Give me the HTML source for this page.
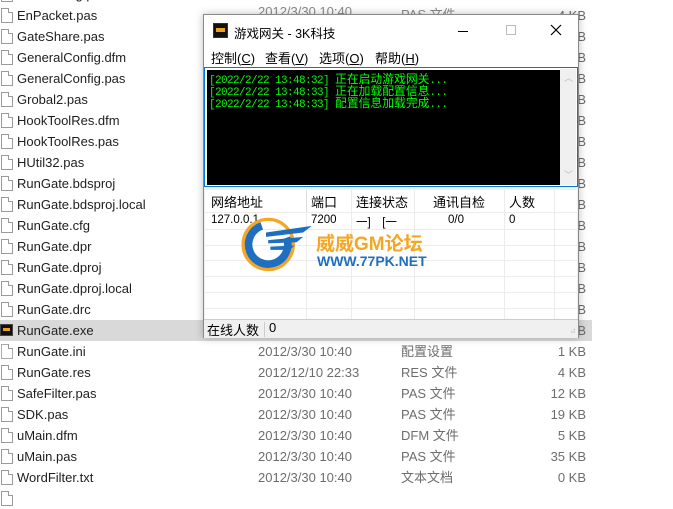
<!DOCTYPE html>
<html><head><meta charset="utf-8"><style>
*{margin:0;padding:0;box-sizing:border-box}
body{width:673px;height:493px;overflow:hidden;background:#fff;position:relative;font-family:"Liberation Sans","Noto Sans CJK SC",sans-serif;font-size:13px}
.row{position:absolute;left:0;width:592px;height:21px;line-height:21px;color:#1e1e1e}
.row.sel{background:#d9d9d9}
.ic{position:absolute;left:1px;top:3px;width:12px;height:15px;border:1px solid #9a9a9a;background:#fff}
.ic:after{content:"";position:absolute;right:-1px;top:-1px;width:4px;height:4px;background:#fff;border-left:1px solid #9a9a9a;border-bottom:1px solid #9a9a9a}
.n{position:absolute;left:17px}
.d{position:absolute;left:258px;color:#6d6d6d}
.t{position:absolute;left:401px;color:#6d6d6d}
.s{position:absolute;right:6px;color:#6d6d6d}
.win{position:absolute;left:203px;top:14px;width:376px;height:324px;background:#f0f0f0;border:1px solid #8a8a8a;box-shadow:0 0 8px rgba(0,0,0,.25)}
.title{position:absolute;left:0;top:0;width:374px;height:32px;background:#fff}
.menu{position:absolute;left:0;top:32px;width:374px;height:20px;background:#fff;font-size:13px}
.menu span{position:absolute;top:1px}
.con{position:absolute;left:0;top:52px;width:374px;height:120px;border:1px solid #0078d7;background:#fff;padding:1px}
.blk{position:absolute;left:2px;top:2px;width:354px;height:115px;background:#000}
.ln{position:absolute;left:2px;color:#00ff00;white-space:nowrap;height:12px;line-height:12px}
.ln b{font-weight:normal;font-family:"Liberation Mono",monospace;font-size:11px;letter-spacing:-0.6px}
.ln i{font-style:normal;font-family:"Noto Sans CJK SC",sans-serif;font-size:11.8px}
.sb{position:absolute;right:1px;top:1px;width:16px;height:116px;background:#f0f0f0}
.list{position:absolute;left:1px;top:175px;width:372px;height:129px;background:#fff;overflow:hidden}
.hl{position:absolute;left:0;width:372px;height:1px;background:#ececec}
.vl{position:absolute;top:0;width:1px;height:129px;background:#ececec}
.h{position:absolute;top:2px;font-size:13px;color:#000}
.c{position:absolute;top:24px;font-size:11.5px;color:#000}
.status{position:absolute;left:0;top:304px;width:374px;height:19px;border-top:1px solid #ccc;background:#f0f0f0;font-size:13px}
</style></head><body>
<div class="row" style="top:-16px"><div class="ic"></div><span class="n">GateConfig.pas</span></div>
<div class="row" style="top:5px"><div class="ic"></div><span class="n">EnPacket.pas</span><span class="s">4 KB</span></div>
<div class="row" style="top:26px"><div class="ic"></div><span class="n">GateShare.pas</span><span class="s">KB</span></div>
<div class="row" style="top:47px"><div class="ic"></div><span class="n">GeneralConfig.dfm</span><span class="s">KB</span></div>
<div class="row" style="top:68px"><div class="ic"></div><span class="n">GeneralConfig.pas</span><span class="s">KB</span></div>
<div class="row" style="top:89px"><div class="ic"></div><span class="n">Grobal2.pas</span><span class="s">KB</span></div>
<div class="row" style="top:110px"><div class="ic"></div><span class="n">HookToolRes.dfm</span><span class="s">KB</span></div>
<div class="row" style="top:131px"><div class="ic"></div><span class="n">HookToolRes.pas</span><span class="s">KB</span></div>
<div class="row" style="top:152px"><div class="ic"></div><span class="n">HUtil32.pas</span><span class="s">KB</span></div>
<div class="row" style="top:173px"><div class="ic"></div><span class="n">RunGate.bdsproj</span><span class="s">KB</span></div>
<div class="row" style="top:194px"><div class="ic"></div><span class="n">RunGate.bdsproj.local</span><span class="s">KB</span></div>
<div class="row" style="top:215px"><div class="ic"></div><span class="n">RunGate.cfg</span><span class="s">KB</span></div>
<div class="row" style="top:236px"><div class="ic"></div><span class="n">RunGate.dpr</span><span class="s">KB</span></div>
<div class="row" style="top:257px"><div class="ic"></div><span class="n">RunGate.dproj</span><span class="s">KB</span></div>
<div class="row" style="top:278px"><div class="ic"></div><span class="n">RunGate.dproj.local</span><span class="s">KB</span></div>
<div class="row" style="top:299px"><div class="ic"></div><span class="n">RunGate.drc</span><span class="s">KB</span></div>
<div class="row sel" style="top:320px"><div style="position:absolute;left:0;top:4px;width:13px;height:12px;background:#111;border:1px solid #444"><div style="margin:3px 2px;width:7px;height:3px;background:#f0a020"></div></div><span class="n">RunGate.exe</span><span class="s">KB</span></div>
<div class="row" style="top:341px"><div class="ic" style="border-color:#aaa"></div><span class="n">RunGate.ini</span><span class="d">2012/3/30 10:40</span><span class="t">配置设置</span><span class="s">1 KB</span></div>
<div class="row" style="top:362px"><div class="ic"></div><span class="n">RunGate.res</span><span class="d">2012/12/10 22:33</span><span class="t">RES 文件</span><span class="s">4 KB</span></div>
<div class="row" style="top:383px"><div class="ic"></div><span class="n">SafeFilter.pas</span><span class="d">2012/3/30 10:40</span><span class="t">PAS 文件</span><span class="s">12 KB</span></div>
<div class="row" style="top:404px"><div class="ic"></div><span class="n">SDK.pas</span><span class="d">2012/3/30 10:40</span><span class="t">PAS 文件</span><span class="s">19 KB</span></div>
<div class="row" style="top:425px"><div class="ic"></div><span class="n">uMain.dfm</span><span class="d">2012/3/30 10:40</span><span class="t">DFM 文件</span><span class="s">5 KB</span></div>
<div class="row" style="top:446px"><div class="ic"></div><span class="n">uMain.pas</span><span class="d">2012/3/30 10:40</span><span class="t">PAS 文件</span><span class="s">35 KB</span></div>
<div class="row" style="top:467px"><div class="ic"></div><span class="n">WordFilter.txt</span><span class="d">2012/3/30 10:40</span><span class="t">文本文档</span><span class="s">0 KB</span></div>
<div class="row" style="top:488px"><div class="ic"></div></div>
<div style="position:absolute;left:258px;top:4px;color:#8a8a8a;font-size:13px">2012/3/30 10:40</div>
<div style="position:absolute;left:401px;top:4px;color:#8a8a8a;font-size:13px">PAS 文件</div>

<div class="win">
 <div class="title">
  <div style="position:absolute;left:9px;top:8px;width:15px;height:15px;background:#111;border:1px solid #333"><div style="margin:4px 2px;width:9px;height:4px;background:#f0a020"></div></div>
  <span style="position:absolute;left:30px;top:8px;font-size:12.5px;color:#000">游戏网关 - 3K科技</span>
  <div style="position:absolute;left:254px;top:16px;width:10px;height:1px;background:#000"></div>
  <div style="position:absolute;left:302px;top:10px;width:10px;height:10px;border:1px solid #bbb"></div>
  <svg style="position:absolute;left:346px;top:9px" width="12" height="12"><path d="M1 1L11 11M11 1L1 11" stroke="#000" stroke-width="1.2"/></svg>
 </div>
 <div class="menu"><span style="left:7px">控制(<u>C</u>)</span><span style="left:61px">查看(<u>V</u>)</span><span style="left:115px">选项(<u>O</u>)</span><span style="left:171px">帮助(<u>H</u>)</span></div>
 <div class="con"><div class="blk">
  <div class="ln" style="top:3px"><b>[2022/2/22 13:48:32] </b><i>正在启动游戏网关</i><b>...</b></div>
  <div class="ln" style="top:15px"><b>[2022/2/22 13:48:33] </b><i>正在加载配置信息</i><b>...</b></div>
  <div class="ln" style="top:27px"><b>[2022/2/22 13:48:33] </b><i>配置信息加载完成</i><b>...</b></div>
  </div>
  <div class="sb"><span style="position:absolute;left:4px;top:2px;color:#bbb;font-size:9px">︿</span><span style="position:absolute;left:4px;bottom:4px;color:#bbb;font-size:9px">﹀</span></div>
 </div>
 <div class="list">
  <div class="hl" style="top:22px"></div><div class="hl" style="top:39px"></div><div class="hl" style="top:55px"></div><div class="hl" style="top:70px"></div><div class="hl" style="top:86px"></div><div class="hl" style="top:102px"></div><div class="hl" style="top:118px"></div>
  <div class="vl" style="left:101px;background:#ddd;height:22px"></div><div class="vl" style="left:146px"></div><div class="vl" style="left:209px"></div><div class="vl" style="left:299px"></div><div class="vl" style="left:349px"></div>
  <div class="vl" style="left:101px;top:22px"></div>
  <span class="h" style="left:6px">网络地址</span><span class="h" style="left:106px">端口</span><span class="h" style="left:151px">连接状态</span><span class="h" style="left:228px">通讯自检</span><span class="h" style="left:304px">人数</span>
  <span class="c" style="left:6px">127.0.0.1</span><span class="c" style="left:106px">7200</span><span class="c" style="left:151px">一]　[一</span><span class="c" style="left:243px">0/0</span><span class="c" style="left:304px">0</span>
  <svg style="position:absolute;left:33px;top:25px" width="80" height="60" viewBox="0 0 70 55">
   <circle cx="26" cy="27" r="23" fill="none" stroke="#f5a623" stroke-width="3"/>
   <circle cx="26" cy="27" r="18" fill="none" stroke="#1f6fc0" stroke-width="7" stroke-dasharray="85 30" transform="rotate(-20 26 27)"/>
   <path d="M24 16L66 10L58 16L24 20Z" fill="#1f6fc0"/><path d="M26 23L58 20L52 25L26 26Z" fill="#1f6fc0"/><path d="M28 29L50 28L46 32L28 32Z" fill="#1f6fc0"/>
  </svg>
  <span style="position:absolute;left:111px;top:39px;color:#f5a623;font-weight:bold;font-size:19px">威威GM论坛</span>
  <span style="position:absolute;left:112px;top:63px;color:#1f6fc0;font-weight:bold;font-size:14px">WWW.77PK.NET</span>
 </div>
 <div class="status"><span style="position:absolute;left:3px;top:0px">在线人数</span><div style="position:absolute;left:60px;top:2px;width:1px;height:15px;background:#ccc"></div><span style="position:absolute;left:65px;top:0px">0</span>
 <span style="position:absolute;right:3px;top:6px;font-size:8px;color:#aaa;letter-spacing:-1px">⠴</span></div>
</div>
</body></html>
